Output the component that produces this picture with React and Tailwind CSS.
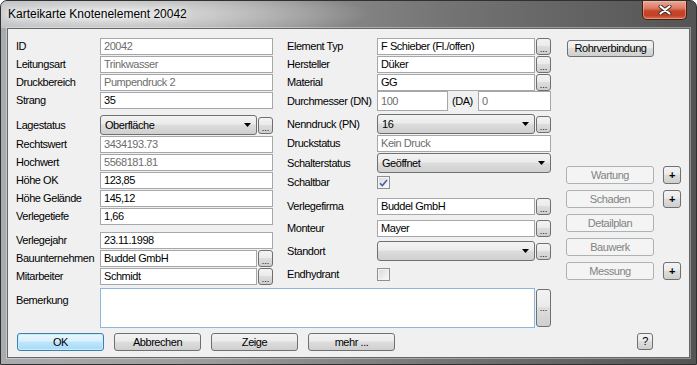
import React from "react";

const btnBg = "bg-[linear-gradient(#f3f3f3_0%,#ebebeb_45%,#dddddd_50%,#cfcfcf_100%)]";

function Box({ value, gray, w, h = "h-[17px]", className = "" }) {
  return (
    <div
      className={`${w} ${h} shrink-0 border border-[#a5a7ab] bg-white pl-[3px] flex items-center whitespace-nowrap overflow-hidden ${
        gray ? "text-[#6d6d6d]" : "text-black"
      } ${className}`}
    >
      {value}
    </div>
  );
}

function Dots({ h = "h-[17px]", className = "" }) {
  return (
    <div
      className={`w-[15px] ${h} shrink-0 rounded-[3px] border border-[#707070] ${btnBg} flex items-end justify-center pb-[2px] text-[9px] leading-[6px] tracking-normal ${className}`}
    >
      ...
    </div>
  );
}

function Combo({ value, w }) {
  return (
    <div
      className={`${w} h-[20px] shrink-0 rounded-[3px] border border-[#707070] ${btnBg} flex items-center pl-[4px] pr-[5px]`}
    >
      <span className="flex-1 whitespace-nowrap">{value}</span>
      <svg width="7" height="4" viewBox="0 0 7 4">
        <path d="M0 0h7L3.5 4z" fill="#000" />
      </svg>
    </div>
  );
}

function Check({ checked }) {
  return (
    <div className="w-[13px] h-[13px] border border-[#8e8f8f] bg-[#f4f4f4] p-[1px]">
      <div className="w-full h-full bg-[linear-gradient(135deg,#dcdcdc,#f8f8f8)] flex items-center justify-center">
        {checked && (
          <svg width="9" height="8" viewBox="0 0 9 8">
            <path d="M1 4.2 L3.4 6.6 L8 1" stroke="#4461ab" strokeWidth="1.6" fill="none" />
          </svg>
        )}
      </div>
    </div>
  );
}

function Btn({ children, w = "w-[87px]", h = "h-[18px]", kind = "normal", className = "" }) {
  const styles = {
    normal: `border-[#707070] ${btnBg} text-black`,
    def: "border-[#3c7fb1] bg-[linear-gradient(#eaf6fd_0%,#d9f0fc_45%,#bee6fd_50%,#a7d9f5_100%)] text-black [box-shadow:inset_0_0_0_1px_#c9ecfd]",
    off: "border-[#adb2b5] bg-[#f4f4f4] text-[#838383]",
  };
  return (
    <div
      className={`${w} ${h} shrink-0 rounded-[3px] border ${styles[kind]} flex items-center justify-center whitespace-nowrap ${className}`}
    >
      {children}
    </div>
  );
}

function Row({ label, lw, mt = "", h = "h-[17px]", children }) {
  return (
    <div className={`flex items-center ${h} ${mt}`}>
      <div className={`${lw} shrink-0 whitespace-nowrap`}>{label}</div>
      {children}
    </div>
  );
}

function CloseBtn() {
  return (
    <div className="w-[45px] h-[19px] rounded-b-[5px] border border-t-0 border-[#4a1c14] bg-[linear-gradient(#eaa898_0%,#dd7b64_40%,#c8452b_55%,#c04226_80%,#d8704f_100%)] [box-shadow:inset_0_0_0_1px_rgba(255,200,185,0.45)] flex items-center justify-center">
      <svg width="14" height="10" viewBox="0 0 14 10">
        <path d="M2.5 1.5 L11.5 8.5 M11.5 1.5 L2.5 8.5" stroke="#3a2b29" strokeWidth="4" strokeLinecap="round" />
        <path d="M2.5 1.5 L11.5 8.5 M11.5 1.5 L2.5 8.5" stroke="#ffffff" strokeWidth="2.2" strokeLinecap="round" />
      </svg>
    </div>
  );
}

export default function App() {
  const L = "w-[84px]";
  const M = "w-[90px]";
  return (
    <div className="w-[697px] h-[365px] overflow-hidden rounded-t-[7px] border border-[#303030] bg-[linear-gradient(90deg,#a9acaf_0%,#9c9c9c_30%,#737373_65%,#545454_100%)] flex flex-col font-['Liberation_Sans',Arial,sans-serif] text-[11px] tracking-[-0.45px] text-black">
      {/* title bar */}
      <div className="h-[27px] shrink-0 flex items-start justify-between pl-[7px] pr-[9px] bg-[radial-gradient(ellipse_260px_28px_at_110px_13px,rgba(236,236,236,0.95),rgba(236,236,236,0))]">
        <div className="mt-[6px] text-[12px] tracking-normal leading-[15px] [text-shadow:0_0_6px_#fff,0_0_10px_#fff]">
          Karteikarte Knotenelement 20042
        </div>
        <CloseBtn />
      </div>

      {/* client area */}
      <div className="mx-[6px] h-[330px] shrink-0 border border-[#666] bg-[#f0f0f0] [box-shadow:0_0_0_1px_rgba(255,255,255,0.35)] flex flex-col">
        <div className="flex pt-[9px]">
          {/* left column */}
          <div className="flex flex-col pl-[8px]">
            <Row label="ID" lw={L}>
              <Box value="20042" gray w="w-[173px]" />
            </Row>
            <Row label="Leitungsart" lw={L} mt="mt-[1px]">
              <Box value="Trinkwasser" gray w="w-[173px]" />
            </Row>
            <Row label="Druckbereich" lw={L} mt="mt-[1px]">
              <Box value="Pumpendruck 2" gray w="w-[173px]" />
            </Row>
            <Row label="Strang" lw={L} mt="mt-[1px]">
              <Box value="35" w="w-[173px]" />
            </Row>
            <Row label="Lagestatus" lw={L} mt="mt-[6px]" h="h-[20px]">
              <Combo value="Oberfläche" w="w-[157px]" />
              <Dots className="ml-[1px]" />
            </Row>
            <Row label="Rechtswert" lw={L} mt="mt-[1px]">
              <Box value="3434193.73" gray w="w-[173px]" />
            </Row>
            <Row label="Hochwert" lw={L} mt="mt-[1px]">
              <Box value="5568181.81" gray w="w-[173px]" />
            </Row>
            <Row label="Höhe OK" lw={L} mt="mt-[1px]">
              <Box value="123,85" w="w-[173px]" />
            </Row>
            <Row label="Höhe Gelände" lw={L} mt="mt-[1px]">
              <Box value="145,12" w="w-[173px]" />
            </Row>
            <Row label="Verlegetiefe" lw={L} mt="mt-[1px]">
              <Box value="1,66" w="w-[173px]" />
            </Row>
            <Row label="Verlegejahr" lw={L} mt="mt-[7px]">
              <Box value="23.11.1998" w="w-[173px]" />
            </Row>
            <Row label="Bauunternehmen" lw={L} mt="mt-[1px]">
              <Box value="Buddel GmbH" w="w-[157px]" />
              <Dots className="ml-[1px]" />
            </Row>
            <Row label="Mitarbeiter" lw={L} mt="mt-[1px]">
              <Box value="Schmidt" w="w-[157px]" />
              <Dots className="ml-[1px]" />
            </Row>
          </div>

          {/* middle column */}
          <div className="flex flex-col ml-[14px]">
            <Row label="Element Typ" lw={M}>
              <Box value="F Schieber (Fl./offen)" w="w-[158px]" />
              <Dots className="ml-[1px]" />
            </Row>
            <Row label="Hersteller" lw={M} mt="mt-[1px]">
              <Box value="Düker" w="w-[158px]" />
              <Dots className="ml-[1px]" />
            </Row>
            <Row label="Material" lw={M} mt="mt-[1px]">
              <Box value="GG" w="w-[158px]" />
              <Dots className="ml-[1px]" />
            </Row>
            <Row label="Durchmesser (DN)" lw={M} h="h-[20px]">
              <Box value="100" gray w="w-[71px]" h="h-[20px]" />
              <div className="w-[30px] shrink-0 pl-[4px]">(DA)</div>
              <Box value="0" gray w="w-[73px]" h="h-[20px]" />
            </Row>
            <Row label="Nenndruck (PN)" lw={M} mt="mt-[3px]" h="h-[20px]">
              <Combo value="16" w="w-[158px]" />
              <Dots className="ml-[1px]" />
            </Row>
            <Row label="Druckstatus" lw={M} mt="mt-[1px]">
              <Box value="Kein Druck" gray w="w-[174px]" />
            </Row>
            <Row label="Schalterstatus" lw={M} mt="mt-[1px]" h="h-[20px]">
              <Combo value="Geöffnet" w="w-[174px]" />
            </Row>
            <Row label="Schaltbar" lw={M} mt="mt-[1px]">
              <Check checked />
            </Row>
            <Row label="Verlegefirma" lw={M} mt="mt-[7px]">
              <Box value="Buddel GmbH" w="w-[158px]" />
              <Dots className="ml-[1px]" />
            </Row>
            <Row label="Monteur" lw={M} mt="mt-[5px]">
              <Box value="Mayer" w="w-[158px]" />
              <Dots className="ml-[1px]" />
            </Row>
            <Row label="Standort" lw={M} mt="mt-[4px]" h="h-[20px]">
              <Combo value="" w="w-[158px]" />
              <Dots className="ml-[1px]" />
            </Row>
            <Row label="Endhydrant" lw={M} mt="mt-[5px]">
              <Check />
            </Row>
          </div>

          {/* right column */}
          <div className="flex flex-col ml-[15px]">
            <Btn w="w-[87px]" h="h-[17px]" className="mt-[2px] ml-[1px]">
              Rohrverbindung
            </Btn>
            <div className="flex mt-[109px]">
              <Btn w="w-[88px]" kind="off">Wartung</Btn>
              <Btn w="w-[18px]" className="ml-[9px] font-bold">+</Btn>
            </div>
            <div className="flex mt-[6px]">
              <Btn w="w-[88px]" kind="off">Schaden</Btn>
              <Btn w="w-[18px]" className="ml-[9px] font-bold">+</Btn>
            </div>
            <div className="flex mt-[6px]">
              <Btn w="w-[88px]" kind="off">Detailplan</Btn>
            </div>
            <div className="flex mt-[6px]">
              <Btn w="w-[88px]" kind="off">Bauwerk</Btn>
            </div>
            <div className="flex mt-[6px]">
              <Btn w="w-[88px]" kind="off">Messung</Btn>
              <Btn w="w-[18px]" className="ml-[9px] font-bold">+</Btn>
            </div>
          </div>
        </div>

        {/* Bemerkung */}
        <div className="flex items-start mt-[3px] pl-[8px]">
          <div className={`${L} shrink-0 pt-[4px]`}>Bemerkung</div>
          <div className="w-[435px] h-[40px] shrink-0 border border-[#8ab6e0] bg-white" />
          <Dots h="h-[38px]" className="ml-[1px] mt-[1px] pb-[15px]" />
        </div>

        {/* buttons */}
        <div className="flex items-start mt-[5px] pl-[9px] pr-[36px]">
          <div className="flex gap-[10px]">
            <Btn kind="def">OK</Btn>
            <Btn>Abbrechen</Btn>
            <Btn>Zeige</Btn>
            <Btn>mehr ...</Btn>
          </div>
          <Btn w="w-[16px]" h="h-[17px]" className="ml-auto">?</Btn>
        </div>
      </div>
    </div>
  );
}
